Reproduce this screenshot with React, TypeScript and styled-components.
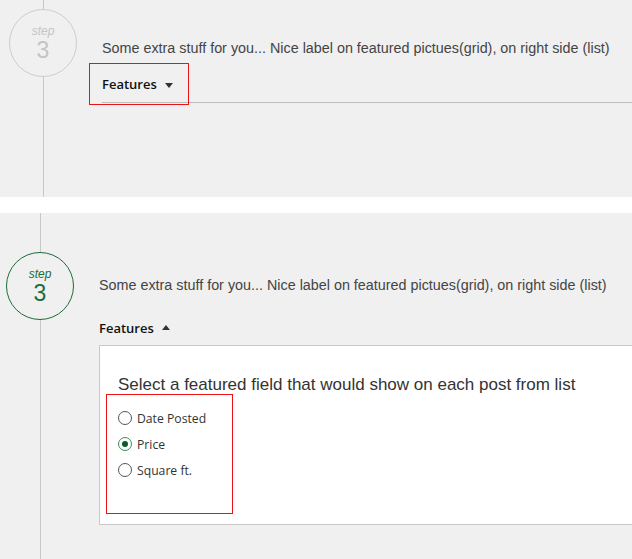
import { useState } from "react";
import styled, { createGlobalStyle } from "styled-components";

const GlobalStyle = createGlobalStyle`
  html, body {
    margin: 0;
    padding: 0;
    background: #ffffff;
    overflow: hidden;
  }
  body {
    font-family: "Liberation Sans", Arial, sans-serif;
    color: #333;
  }
`;

const OPTIONS = ["Date Posted", "Price", "Square ft."];

export default function App() {
  const [selected, setSelected] = useState("Price");

  return (
    <>
      <GlobalStyle />
      <Page>
        {/* Collapsed step */}
        <StepPanel $height={197}>
          <Rail $width={86}>
            <RailLine $fixed={9} />
            <StepBadge $active={false}>
              <span className="label">step</span>
              <span className="number">3</span>
            </StepBadge>
            <RailLine />
          </Rail>
          <StepContent $offset={16} $top={38}>
            <Description>Some extra stuff for you... Nice label on featured pictues(grid), on right side (list)</Description>
            <TabBar>
              <Tab $outlined>
                Features
                <Caret $up={false} />
              </Tab>
            </TabBar>
          </StepContent>
        </StepPanel>

        <Spacer />

        {/* Expanded step */}
        <StepPanel $height={346}>
          <Rail $width={80}>
            <RailLine $fixed={39} />
            <StepBadge $active>
              <span className="label">step</span>
              <span className="number">3</span>
            </StepBadge>
            <RailLine />
          </Rail>
          <StepContent $offset={19} $top={62}>
            <Description>Some extra stuff for you... Nice label on featured pictues(grid), on right side (list)</Description>
            <OpenTab>
              Features
              <Caret $up />
            </OpenTab>
            <OptionsBox>
              <OptionsTitle>Select a featured field that would show on each post from list</OptionsTitle>
              <RadioGroup>
                {OPTIONS.map((option) => (
                  <RadioRow key={option}>
                    <input
                      type="radio"
                      name="featured"
                      checked={selected === option}
                      onChange={() => setSelected(option)}
                    />
                    <span>{option}</span>
                  </RadioRow>
                ))}
              </RadioGroup>
            </OptionsBox>
          </StepContent>
        </StepPanel>
      </Page>
    </>
  );
}

const Page = styled.div`
  display: flex;
  flex-direction: column;
  width: 632px;
  height: 559px;
  overflow: hidden;
`;

const Spacer = styled.div`
  height: 16px;
  background: #ffffff;
  flex-shrink: 0;
`;

const StepPanel = styled.section<{ $height: number }>`
  display: flex;
  height: ${(p) => p.$height}px;
  flex-shrink: 0;
  background: #f0f0f0;
`;

const Rail = styled.div<{ $width: number }>`
  display: flex;
  flex-direction: column;
  align-items: center;
  width: ${(p) => p.$width}px;
  flex-shrink: 0;
`;

const RailLine = styled.div<{ $fixed?: number }>`
  width: 1px;
  background: #c8c8c8;
  ${(p) => (p.$fixed !== undefined ? `height: ${p.$fixed}px; flex-shrink: 0;` : "flex: 1;")}
`;

const StepBadge = styled.div<{ $active: boolean }>`
  width: 66px;
  height: 66px;
  border-radius: 50%;
  border: 1px solid ${(p) => (p.$active ? "#1d6b3b" : "#cdcdcd")};
  display: flex;
  flex-direction: column;
  align-items: center;
  justify-content: center;
  flex-shrink: 0;
  color: ${(p) => (p.$active ? "#1d6b3b" : "#c4c4c4")};

  .label {
    font-style: italic;
    font-size: 12px;
    line-height: 14px;
  }

  .number {
    font-size: 23px;
    line-height: 24px;
  }
`;

const StepContent = styled.div<{ $offset: number; $top: number }>`
  flex: 1;
  min-width: 0;
  display: flex;
  flex-direction: column;
  padding-left: ${(p) => p.$offset}px;
  padding-top: ${(p) => p.$top}px;
`;

const Description = styled.p`
  margin: 0;
  font-size: 14.35px;
  line-height: 20px;
  color: #444;
  white-space: nowrap;
`;

const TabBar = styled.div`
  margin-top: 5px;
  height: 39px;
  border-bottom: 1px solid #bdbdbd;
  display: flex;
  align-items: flex-start;
`;

const Tab = styled.div<{ $outlined: boolean }>`
  box-sizing: border-box;
  display: flex;
  align-items: center;
  margin-left: -13px;
  padding: 0 12px;
  width: 100px;
  height: 42px;
  border: 1px solid ${(p) => (p.$outlined ? "#ee1111" : "transparent")};
  font-family: "Open Sans", "Noto Sans", sans-serif;
  font-weight: 600;
  font-size: 13px;
  color: #111;
`;

const OpenTab = styled.div`
  display: flex;
  align-items: center;
  margin-top: 23px;
  height: 20px;
  font-family: "Open Sans", "Noto Sans", sans-serif;
  font-weight: 600;
  font-size: 13px;
  color: #111;
`;

const Caret = styled.span<{ $up: boolean }>`
  display: inline-block;
  margin-left: 8px;
  width: 0;
  height: 0;
  border-left: 4px solid transparent;
  border-right: 4px solid transparent;
  ${(p) => (p.$up ? "border-bottom: 5px solid #333;" : "border-top: 5px solid #333;")}
  margin-top: ${(p) => (p.$up ? "-1px" : "2px")};
`;

const OptionsBox = styled.div`
  margin-top: 7px;
  margin-right: -10px;
  background: #ffffff;
  border: 1px solid #c8c8c8;
  padding: 30px 0 10px 18px;
`;

const OptionsTitle = styled.h3`
  margin: 0;
  font-weight: normal;
  font-size: 17px;
  line-height: 18px;
  color: #333;
  white-space: nowrap;
`;

const RadioGroup = styled.div`
  box-sizing: border-box;
  margin-left: -12px;
  width: 127px;
  height: 120px;
  border: 1px solid #ee1111;
  padding: 10px 0 0 11px;
  display: flex;
  flex-direction: column;
`;

const RadioRow = styled.label`
  display: flex;
  align-items: center;
  height: 26px;
  font-family: "Open Sans", "Noto Sans", sans-serif;
  font-size: 12.2px;
  color: #333;
  cursor: pointer;

  input {
    appearance: none;
    margin: 0 5px 0 0;
    width: 14px;
    height: 14px;
    border-radius: 50%;
    border: 1px solid #555;
    background: #fff;
    display: grid;
    place-items: center;
  }

  input:checked {
    border-color: #3c8c5a;
  }

  input:checked::after {
    content: "";
    width: 6px;
    height: 6px;
    border-radius: 50%;
    background: #0f5a2a;
  }
`;
